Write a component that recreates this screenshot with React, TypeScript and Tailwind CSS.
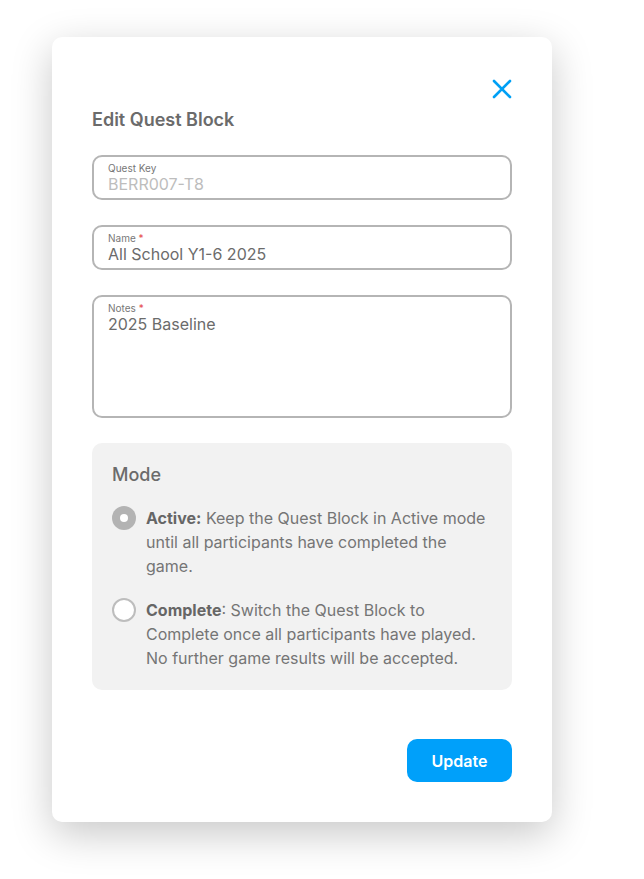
import { useState } from "react";

export default function App() {
  const [mode, setMode] = useState<"active" | "complete">("active");

  return (
    <div className="min-h-screen bg-white pt-[37px] pl-[52px] font-['Inter',sans-serif]">
      <div className="w-[500px] h-[785px] rounded-[10px] bg-white shadow-[0_12px_40px_rgba(0,0,0,0.22)] px-10 pt-[42px] flex flex-col">
        <div className="flex justify-end h-[20px]">
          <button className="w-[20px] h-[20px] text-[#00a0f5]">
            <svg viewBox="0 0 20 20" width="20" height="20" fill="none" stroke="currentColor" strokeWidth="2.6" strokeLinecap="round">
              <path d="M2 2 L18 18 M18 2 L2 18" />
            </svg>
          </button>
        </div>

        <h1 className="mt-[10px] text-[18px] leading-[22px] font-semibold text-[#6b6b6b]">Edit Quest Block</h1>

        <div className="mt-[24px] h-[45px] rounded-[10px] border-2 border-[#b5b5b5] px-[14px] pt-[5px]">
          <div className="text-[10px] leading-[13px] text-[#777]">Quest Key</div>
          <div className="text-[16px] leading-[19px] text-[#bdbdbd]">BERR007-T8</div>
        </div>

        <div className="mt-[25px] h-[45px] rounded-[10px] border-2 border-[#b5b5b5] px-[14px] pt-[5px]">
          <div className="text-[10px] leading-[13px] text-[#777]">
            Name <span className="text-[#e5484d]">*</span>
          </div>
          <div className="text-[16px] leading-[19px] text-[#6b6b6b]">All School Y1-6 2025</div>
        </div>

        <div className="mt-[25px] h-[123px] rounded-[10px] border-2 border-[#b5b5b5] px-[14px] pt-[5px]">
          <div className="text-[10px] leading-[13px] text-[#777]">
            Notes <span className="text-[#e5484d]">*</span>
          </div>
          <div className="text-[16px] leading-[19px] text-[#6b6b6b]">2025 Baseline</div>
        </div>

        <div className="mt-[25px] h-[247px] rounded-[10px] bg-[#f2f2f2] px-5 pt-[21px]">
          <div className="text-[18px] leading-[22px] font-medium text-[#6b6b6b]">Mode</div>

          <div className="mt-[20px] flex flex-col gap-[20px]">
            <label className="flex gap-[10px] cursor-pointer" onClick={() => setMode("active")}>
              <span
                className={
                  mode === "active"
                    ? "w-6 h-6 shrink-0 rounded-full bg-[#b3b3b3] flex items-center justify-center"
                    : "w-6 h-6 shrink-0 rounded-full bg-white border-2 border-[#bdbdbd]"
                }
              >
                {mode === "active" && <span className="w-2 h-2 rounded-full bg-white" />}
              </span>
              <span className="text-[16px] leading-[24px] text-[#757575]">
                <b className="font-bold text-[#666]">Active:</b> Keep the Quest Block in Active mode until all participants have completed the game.
              </span>
            </label>

            <label className="flex gap-[10px] cursor-pointer" onClick={() => setMode("complete")}>
              <span
                className={
                  mode === "complete"
                    ? "w-6 h-6 shrink-0 rounded-full bg-[#b3b3b3] flex items-center justify-center"
                    : "w-6 h-6 shrink-0 rounded-full bg-white border-2 border-[#bdbdbd]"
                }
              >
                {mode === "complete" && <span className="w-2 h-2 rounded-full bg-white" />}
              </span>
              <span className="text-[16px] leading-[24px] text-[#757575]">
                <b className="font-bold text-[#666]">Complete</b>: Switch the Quest Block to Complete once all participants have played. No further game results will be accepted.
              </span>
            </label>
          </div>
        </div>

        <div className="mt-[49px] flex justify-end">
          <button className="w-[105px] h-[43px] rounded-[10px] bg-[#00a0fa] text-white text-[16px] font-semibold">
            Update
          </button>
        </div>
      </div>
    </div>
  );
}
